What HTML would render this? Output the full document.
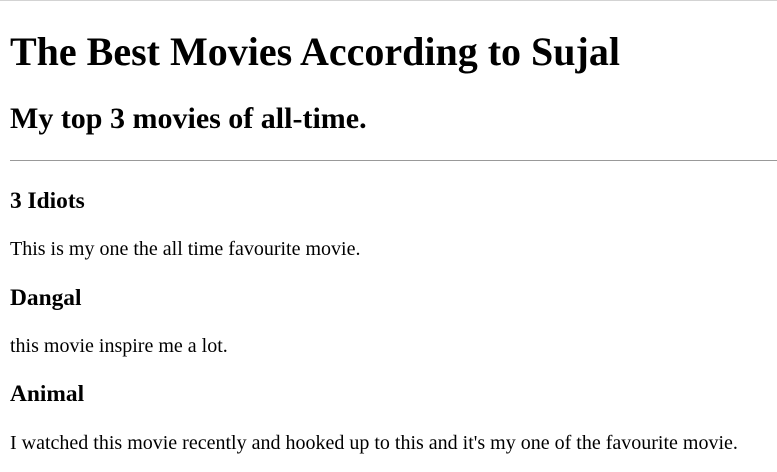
<!DOCTYPE html>
<html><head><meta charset="utf-8"><style>
html{border-top:1px solid #d3d3d3;}
body{font-family:"Liberation Serif",serif;zoom:1.25;margin:8px;color:#000;background:#fff;}
hr{margin:8px -10px 8px 0;border:0;border-top:1px solid #999;}
.c{position:relative;top:2.4px;}
</style></head><body>
<h1>The Best Movies According to Sujal</h1>
<h2>My top 3 movies of all-time.</h2>
<hr>
<div class="c">
<h3>3 Idiots</h3>
<p>This is my one the all time favourite movie.</p>
<h3>Dangal</h3>
<p>this movie inspire me a lot.</p>
<h3>Animal</h3>
<p>I watched this movie recently and hooked up to this and it's my one of the favourite movie.</p>
</div>
</body></html>
